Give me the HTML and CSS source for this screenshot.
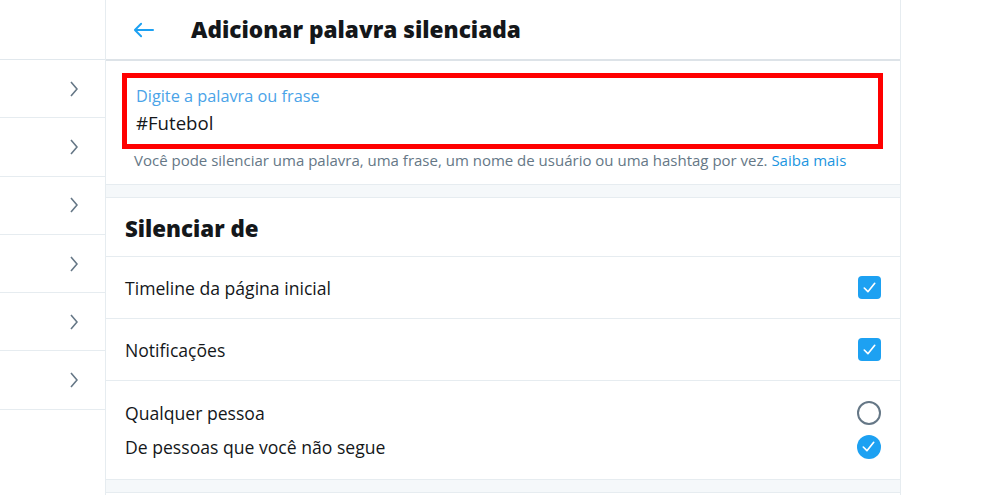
FILE: index.html
```html
<!DOCTYPE html>
<html lang="pt">
<head>
<meta charset="utf-8">
<link rel="stylesheet" href="styles.css">
</head>
<body>
<div class="page">
  <aside class="sidebar">
    <div class="side-top"></div>
    <div class="side-row"><svg class="chev" viewBox="0 0 8 16"><polyline points="1,1 7,8 1,15"/></svg></div>
    <div class="side-row"><svg class="chev" viewBox="0 0 8 16"><polyline points="1,1 7,8 1,15"/></svg></div>
    <div class="side-row"><svg class="chev" viewBox="0 0 8 16"><polyline points="1,1 7,8 1,15"/></svg></div>
    <div class="side-row"><svg class="chev" viewBox="0 0 8 16"><polyline points="1,1 7,8 1,15"/></svg></div>
    <div class="side-row"><svg class="chev" viewBox="0 0 8 16"><polyline points="1,1 7,8 1,15"/></svg></div>
    <div class="side-row"><svg class="chev" viewBox="0 0 8 16"><polyline points="1,1 7,8 1,15"/></svg></div>
  </aside>
  <main class="main">
    <header class="header">
      <svg class="back" viewBox="0 0 22 16"><path d="M21 8H2M8.5 1.5L2 8l6.5 6.5"/></svg>
      <h1 class="title">Adicionar palavra silenciada</h1>
    </header>
    <section class="input-section">
      <div class="field">
        <div class="field-label">Digite a palavra ou frase</div>
        <div class="field-value">#Futebol</div>
      </div>
      <p class="help">Você pode silenciar uma palavra, uma frase, um nome de usuário ou uma hashtag por vez. <a class="link">Saiba mais</a></p>
    </section>
    <div class="gap"></div>
    <section class="mute-section">
      <h2 class="section-title">Silenciar de</h2>
      <div class="row">
        <span class="row-text">Timeline da página inicial</span>
        <span class="checkbox"><svg viewBox="0 0 22 22"><path d="M6 11.5l3.5 3.5L16 7"/></svg></span>
      </div>
      <div class="row">
        <span class="row-text">Notificações</span>
        <span class="checkbox"><svg viewBox="0 0 22 22"><path d="M6 11.5l3.5 3.5L16 7"/></svg></span>
      </div>
      <div class="row-group">
        <div class="sub-row">
          <span class="row-text">Qualquer pessoa</span>
          <span class="radio"></span>
        </div>
        <div class="sub-row">
          <span class="row-text">De pessoas que você não segue</span>
          <span class="radio checked"><svg viewBox="0 0 22 22"><path d="M6 11.5l3.5 3.5L16 7"/></svg></span>
        </div>
      </div>
    </section>
    <div class="gap bottom-gap"></div>
  </main>
</div>
</body>
</html>
```
FILE: styles.css
```css
* { box-sizing: border-box; }
html, body { margin: 0; padding: 0; background: #fff; }
body {
  font-family: "Open Sans", "Noto Sans", sans-serif;
  color: #14171a;
  overflow: hidden;
}
.page {
  display: flex;
  height: 495px;
}
.sidebar {
  width: 106px;
  flex: none;
  border-right: 1px solid #e6ecf0;
}
.side-top { height: 60px; border-bottom: 1px solid #e1e8ed; }
.side-row {
  height: 58.3px;
  border-bottom: 1px solid #e6ecf0;
  display: flex;
  align-items: center;
  justify-content: flex-end;
  padding-right: 27px;
}
.chev { width: 8px; height: 16px; fill: none; stroke: #657786; stroke-width: 1.6; }
.main {
  width: 795px;
  flex: none;
  border-right: 1px solid #e6ecf0;
  display: flex;
  flex-direction: column;
}
.header {
  height: 61px;
  flex: none;
  border-bottom: 2px solid #dde3e8;
  display: flex;
  align-items: center;
  padding-left: 27px;
}
.back { width: 21px; height: 16px; fill: none; stroke: #1da1f2; stroke-width: 2; stroke-linecap: round; stroke-linejoin: round; margin-top: 1px; }
.title {
  margin: 0 0 0 37px;
  font-size: 22.6px;
  font-weight: 800;
  letter-spacing: 0;
  color: #14171a;
}
.input-section {
  padding: 12px 16px 0 16px;
  height: 123px;
  flex: none;
}
.field {
  width: 761px;
  height: 76px;
  border: 5px solid #ff0000;
  padding: 7px 0 0 9px;
}
.field-label { font-size: 16.3px; color: #4aa3e8; line-height: 22px; }
.field-value { font-size: 18.6px; color: #14171a; line-height: 26px; margin-top: 3px; }
.help {
  margin: 0 0 0 12px;
  font-size: 15px;
  line-height: 22px;
  color: #657786;
  white-space: nowrap;
}
.link { color: #1b95e0; text-decoration: none; }
.gap {
  height: 14px;
  flex: none;
  background: #f5f8fa;
  border-top: 1px solid #e6ecf0;
  border-bottom: 1px solid #e6ecf0;
}
.mute-section { flex: none; }
.section-title {
  margin: 0;
  height: 59px;
  display: flex;
  align-items: center;
  padding-left: 19px;
  font-size: 22.3px;
  font-weight: 800;
  border-bottom: 1px solid #e6ecf0;
  padding-top: 3px;
}
.row {
  height: 62px;
  display: flex;
  align-items: center;
  justify-content: space-between;
  padding: 0 19px 0 19px;
  border-bottom: 1px solid #e6ecf0;
}
.row-text { font-size: 17.6px; color: #14171a; }
.checkbox {
  width: 23px;
  height: 23px;
  border-radius: 4px;
  background: #1da1f2;
  display: flex;
}
.checkbox svg, .radio svg { width: 23px; height: 23px; fill: none; stroke: #fff; stroke-width: 1.6; stroke-linecap: round; stroke-linejoin: round; }
.row-group {
  height: 98px;
  padding: 15px 19px 0 19px;
}
.sub-row {
  height: 34px;
  display: flex;
  align-items: center;
  justify-content: space-between;
}
.radio {
  width: 24px;
  height: 24px;
  border-radius: 50%;
  border: 2px solid #657786;
  display: flex;
}
.radio.checked {
  border: none;
  background: #1da1f2;
}
.bottom-gap { height: 14px; }
```
